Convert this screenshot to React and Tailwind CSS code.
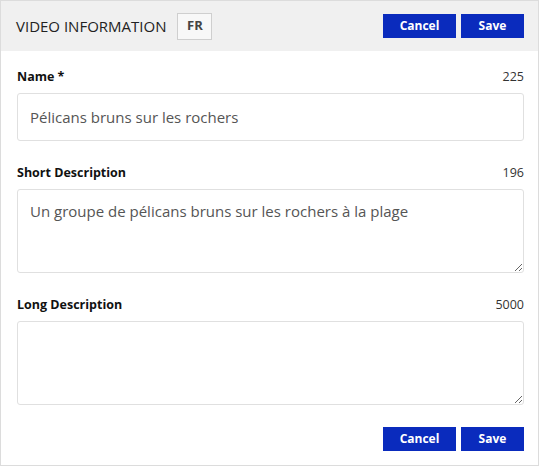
import React from 'react';

const Field = ({ label, count, children }) => (
  <div>
    <div className="flex items-center justify-between h-[18px] mb-[7px] text-[12.5px]">
      <span className="font-bold text-[#111]">{label}</span>
      <span className="text-[#333]">{count}</span>
    </div>
    {children}
  </div>
);

const Buttons = () => (
  <div className="flex gap-[5px]">
    <button className="w-[73px] h-[24px] bg-[#0a2bbd] text-white text-[12px] font-bold">Cancel</button>
    <button className="w-[63px] h-[24px] bg-[#0a2bbd] text-white text-[12px] font-bold">Save</button>
  </div>
);

export default function App() {
  return (
    <div className="w-[539px] h-[466px] border border-[#dcdcdc] bg-white flex flex-col font-['Open_Sans',sans-serif]">
      {/* Header */}
      <div className="h-[50px] bg-[#f0f0f0] flex items-center justify-between pl-[15px] pr-[14px]">
        <div className="flex items-center gap-[11px]">
          <span className="text-[15px] text-[#222]">VIDEO INFORMATION</span>
          <span className="w-[35px] h-[27px] border border-[#cfcfcf] bg-[#f8f8f8] flex items-center justify-center text-[13px] font-bold text-[#444]">FR</span>
        </div>
        <Buttons />
      </div>

      {/* Body */}
      <div className="pl-[16px] pr-[14px] pt-[17px] flex flex-col gap-[23px]">
        <Field label="Name *" count="225">
          <input
            type="text"
            defaultValue="Pélicans bruns sur les rochers"
            className="w-full h-[48px] px-3 border border-[#e0e0e0] rounded-[3px] text-[15px] text-[#555] outline-none"
          />
        </Field>
        <Field label="Short Description" count="196">
          <textarea
            defaultValue="Un groupe de pélicans bruns sur les rochers à la plage"
            className="block w-full h-[84px] px-3 pt-[9px] leading-6 border border-[#e0e0e0] rounded-[3px] text-[15px] text-[#555] outline-none"
          />
        </Field>
        <Field label="Long Description" count="5000">
          <textarea className="block w-full h-[84px] px-3 pt-[9px] leading-6 border border-[#e0e0e0] rounded-[3px] text-[15px] text-[#555] outline-none" />
        </Field>
        <div className="flex justify-end -mt-[1px]">
          <Buttons />
        </div>
      </div>
    </div>
  );
}
